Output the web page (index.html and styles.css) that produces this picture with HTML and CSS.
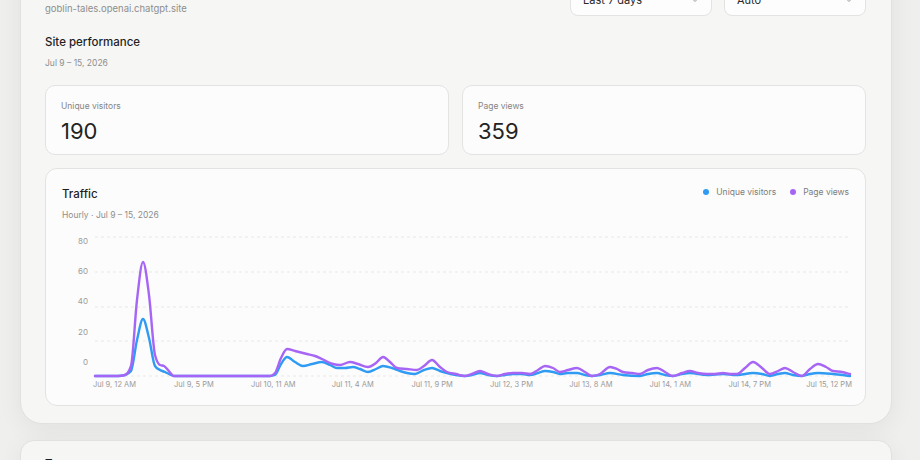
FILE: index.html
```html
<!DOCTYPE html>
<html lang="en">
<head>
    <meta charset="UTF-8">
    <meta name="viewport" content="width=device-width, initial-scale=1.0">
    <title>Goblin Tales · Analytics</title>
    <link rel="stylesheet" href="styles.css">
</head>
<body>
    <div class="page">
        <div class="panel">
            <div class="panel-head">
                <div class="site">
                    <h1 class="site-name">Goblin Tales</h1>
                    <div class="site-url">goblin-tales.openai.chatgpt.site</div>
                </div>
                <div class="filters">
                    <div class="select">
                        <span>Last 7 days</span>
                        <svg class="chevron" width="8" height="8" viewBox="0 0 8 8"><path d="M1.5 3l2.5 2.5L6.5 3"/></svg>
                    </div>
                    <div class="select">
                        <span>Auto</span>
                        <svg class="chevron" width="8" height="8" viewBox="0 0 8 8"><path d="M1.5 3l2.5 2.5L6.5 3"/></svg>
                    </div>
                </div>
            </div>

            <h2 class="section-title">Site performance</h2>
            <div class="section-sub">Jul 9 – 15, 2026</div>

            <div class="stats">
                <div class="stat">
                    <div class="stat-label">Unique visitors</div>
                    <div class="stat-value">190</div>
                </div>
                <div class="stat">
                    <div class="stat-label">Page views</div>
                    <div class="stat-value">359</div>
                </div>
            </div>

            <div class="chart-card">
                <div class="chart-head">
                    <div>
                        <div class="chart-title">Traffic</div>
                        <div class="chart-sub">Hourly · Jul 9 – 15, 2026</div>
                    </div>
                    <div class="legend">
                        <span class="legend-item"><i class="dot dot-visitors"></i>Unique visitors</span>
                        <span class="legend-item"><i class="dot dot-views"></i>Page views</span>
                    </div>
                </div>
                <svg id="chart" class="chart" viewBox="62 230 787 165" height="165">
                    <g id="grid"></g>
                    <g id="axis"></g>
                    <path id="line-visitors" class="line line-visitors"/>
                    <path id="line-views" class="line line-views"/>
                </svg>
            </div>
        </div>

        <div class="panel panel-next">
            <h2 class="section-title">Top pages</h2>
        </div>
    </div>

    <script>
        // chart area: x 95..850, y 376 = 0
        const views = [
            [95,376],[118,376],[125,375],[131,366],[137,300],[143,262],[149,295],[155,355],[160,365],[164,366],[168,370],[174,376],
            [270,376],[275,373],[281,358],[287,349],[295,351],[307,354],[315,356],[322,359],[333,364],[340,365],[350,362],[358,364],
            [368,367],[376,363],[383,357],[390,362],[397,368],[407,369],[417,370],[424,366],[432,360],[440,367],[447,372],[456,374],
            [465,376],[472,374],[480,371],[488,374],[497,376],[505,374],[513,373],[522,373],[530,374],[538,370],[545,366],[553,368],
            [560,372],[568,370],[577,368],[585,372],[592,376],[600,374],[610,367],[617,369],[623,372],[632,373],[640,374],[648,370],
            [657,368],[665,372],[673,376],[682,373],[690,371],[698,373],[707,374],[715,374],[723,373],[730,374],[737,374],[745,368],
            [753,362],[762,368],[770,374],[778,371],[785,368],[793,372],[802,376],[810,369],[818,364],[826,367],[833,371],[842,372],[850,374]
        ];
        const visitors = [
            [95,376],[118,376],[125,375],[131,371],[137,340],[143,319],[149,338],[155,366],[160,370],[165,372],[169,374],[174,376],
            [270,376],[275,375],[281,364],[287,357],[295,362],[303,366],[312,364],[322,362],[330,365],[337,368],[345,368],[353,367],
            [360,369],[368,372],[376,369],[383,366],[392,368],[400,371],[407,373],[415,374],[424,370],[432,368],[440,371],[447,373],
            [456,375],[465,376],[472,375],[480,373],[488,375],[497,376],[505,375],[513,374],[522,374],[530,375],[538,373],[545,371],
            [553,372],[560,374],[568,373],[577,373],[585,375],[592,376],[600,375],[610,373],[623,375],[640,376],[648,374],[657,373],
            [665,375],[673,376],[682,374],[690,373],[707,375],[723,374],[737,375],[753,373],[762,374],[770,376],[778,374],[785,373],
            [793,375],[802,376],[810,374],[818,373],[833,374],[850,376]
        ];

        function sign(v) { return v < 0 ? -1 : 1; }

        // monotone cubic, same idea as d3.curveMonotoneX
        function smoothPath(pts) {
            const n = pts.length;
            const s = [], m = [];
            for (let i = 0; i < n - 1; i++) {
                s.push((pts[i + 1][1] - pts[i][1]) / (pts[i + 1][0] - pts[i][0]));
            }
            m[0] = s[0];
            m[n - 1] = s[n - 2];
            for (let i = 1; i < n - 1; i++) {
                const h0 = pts[i][0] - pts[i - 1][0];
                const h1 = pts[i + 1][0] - pts[i][0];
                const p = (s[i - 1] * h1 + s[i] * h0) / (h0 + h1);
                m[i] = (sign(s[i - 1]) + sign(s[i])) * Math.min(Math.abs(s[i - 1]), Math.abs(s[i]), 0.5 * Math.abs(p)) || 0;
            }
            let d = `M${pts[0][0]},${pts[0][1]}`;
            for (let i = 0; i < n - 1; i++) {
                const dx = (pts[i + 1][0] - pts[i][0]) / 3;
                d += `C${pts[i][0] + dx},${pts[i][1] + m[i] * dx} ${pts[i + 1][0] - dx},${pts[i + 1][1] - m[i + 1] * dx} ${pts[i + 1][0]},${pts[i + 1][1]}`;
            }
            return d;
        }

        const NS = 'http://www.w3.org/2000/svg';
        const grid = document.getElementById('grid');
        const axis = document.getElementById('axis');

        [237, 272, 307, 341, 376].forEach(y => {
            const line = document.createElementNS(NS, 'line');
            line.setAttribute('x1', 95);
            line.setAttribute('x2', 850);
            line.setAttribute('y1', y);
            line.setAttribute('y2', y);
            line.setAttribute('class', 'grid-line');
            grid.appendChild(line);
        });

        [['80', 242], ['60', 272], ['40', 302], ['20', 333], ['0', 363]].forEach(([label, y]) => {
            const t = document.createElementNS(NS, 'text');
            t.setAttribute('x', 88);
            t.setAttribute('y', y);
            t.setAttribute('class', 'y-label');
            t.textContent = label;
            axis.appendChild(t);
        });

        const ticks = ['Jul 9, 12 AM', 'Jul 9, 5 PM', 'Jul 10, 11 AM', 'Jul 11, 4 AM', 'Jul 11, 9 PM',
                       'Jul 12, 3 PM', 'Jul 13, 8 AM', 'Jul 14, 1 AM', 'Jul 14, 7 PM', 'Jul 15, 12 PM'];
        ticks.forEach((label, i) => {
            const t = document.createElementNS(NS, 'text');
            t.setAttribute('x', 114.5 + i * 79.4);
            t.setAttribute('y', 385);
            t.setAttribute('class', 'x-label');
            t.textContent = label;
            axis.appendChild(t);
        });

        document.getElementById('line-visitors').setAttribute('d', smoothPath(visitors));
        document.getElementById('line-views').setAttribute('d', smoothPath(views));
    </script>
</body>
</html>
```

FILE: styles.css
```css
body {
    margin: 0;
    background: #efefee;
    font-family: Inter, "Noto Sans", sans-serif;
    color: #1f1f1f;
}

.page {
    width: 872px;
    margin: -49px 0 0 20px;
}

.panel {
    background: #f6f6f5;
    border: 1px solid #e1e1df;
    border-radius: 22px;
    padding: 24px 25px 17px 24px;
    box-shadow: 0 6px 26px rgba(0, 0, 0, 0.06);
}

.panel-next {
    margin-top: 16px;
    border-radius: 14px;
    padding-top: 15px;
    height: 60px;
}

.panel-head {
    display: flex;
    justify-content: space-between;
    align-items: flex-end;
}

.site-name {
    margin: 0;
    font-size: 17px;
    line-height: 24px;
    font-weight: 500;
}

.site-url {
    margin-top: 2px;
    font-size: 9.5px;
    line-height: 14px;
    color: #8e8e8c;
}

.filters {
    display: flex;
    gap: 12px;
}

.select {
    box-sizing: border-box;
    width: 142px;
    height: 32px;
    padding: 0 12px;
    display: flex;
    align-items: center;
    justify-content: space-between;
    background: #fdfdfd;
    border: 1px solid #e3e3e1;
    border-radius: 8px;
    font-size: 11px;
    color: #2a2a2a;
}

.chevron path {
    fill: none;
    stroke: #9a9a9a;
    stroke-width: 1;
}

.section-title {
    margin: 18px 0 0;
    font-size: 11.5px;
    line-height: 16px;
    font-weight: 500;
}

.panel-next .section-title {
    margin-top: 0;
}

.section-sub {
    margin-top: 7px;
    font-size: 8.5px;
    line-height: 12px;
    color: #8e8e8c;
}

.stats {
    display: grid;
    grid-template-columns: 1fr 1fr;
    gap: 13px;
    margin-top: 16px;
}

.stat {
    background: #fcfcfc;
    border: 1px solid #e3e3e1;
    border-radius: 10px;
    padding: 14px 15px 10px;
}

.stat-label {
    font-size: 8.5px;
    line-height: 12px;
    color: #858584;
}

.stat-value {
    margin-top: 6px;
    font-size: 22px;
    line-height: 26px;
    color: #232323;
}

.chart-card {
    margin-top: 13px;
    background: #fcfcfc;
    border: 1px solid #e3e3e1;
    border-radius: 12px;
    padding: 17px 16px 10px;
}

.chart-head {
    display: flex;
    justify-content: space-between;
    align-items: flex-start;
}

.chart-title {
    font-size: 11.5px;
    line-height: 16px;
    font-weight: 500;
}

.chart-sub {
    margin-top: 7px;
    font-size: 8.5px;
    line-height: 12px;
    color: #8e8e8c;
}

.legend {
    display: flex;
    gap: 14px;
    font-size: 8.5px;
    line-height: 12px;
    color: #7c7c7c;
}

.legend-item {
    display: flex;
    align-items: center;
    gap: 7px;
}

.dot {
    width: 6px;
    height: 6px;
    border-radius: 50%;
}

.dot-visitors { background: #2f9bf3; }
.dot-views { background: #a665f4; }

.chart {
    display: block;
    width: 100%;
    margin-top: 9px;
    overflow: visible;
}

.grid-line {
    stroke: #e8e8e6;
    stroke-width: 1;
    stroke-dasharray: 3 3;
}

.y-label {
    font-size: 8px;
    fill: #9b9b9b;
    text-anchor: end;
    dominant-baseline: middle;
}

.x-label {
    font-size: 7.5px;
    fill: #9b9b9b;
    text-anchor: middle;
    dominant-baseline: middle;
}

.line {
    fill: none;
    stroke-width: 2.4;
    stroke-linejoin: round;
    stroke-linecap: round;
}

.line-visitors { stroke: #2f9bf3; }
.line-views { stroke: #a665f4; }
```
